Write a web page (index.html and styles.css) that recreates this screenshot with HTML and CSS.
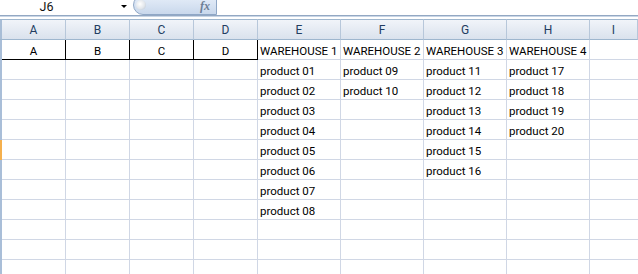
FILE: index.html
```html
<!DOCTYPE html>
<html>
<head>
    <meta charset="utf-8" />
    <title>Warehouse Products</title>
    <link rel="stylesheet" href="styles.css">
</head>
<body>
    <div class="toolbar">
        <div class="name-box">J6</div>
        <div class="name-arrow"></div>
        <div class="formula-btn">
            <span class="knob"></span>
            <span class="fx">fx</span>
        </div>
    </div>
    <div class="rule"></div>

    <div class="sheet" id="sheet"></div>

    <script>
    const cols = ["A", "B", "C", "D", "E", "F", "G", "H", "I"];
    const data = [
      ["A", "B", "C", "D", "WAREHOUSE 1", "WAREHOUSE 2", "WAREHOUSE 3", "WAREHOUSE 4"],
      ["", "", "", "", "product 01", "product 09", "product 11", "product 17"],
      ["", "", "", "", "product 02", "product 10", "product 12", "product 18"],
      ["", "", "", "", "product 03", "", "product 13", "product 19"],
      ["", "", "", "", "product 04", "", "product 14", "product 20"],
      ["", "", "", "", "product 05", "", "product 15", ""],
      ["", "", "", "", "product 06", "", "product 16", ""],
      ["", "", "", "", "product 07", "", "", ""],
      ["", "", "", "", "product 08", "", "", ""],
      [], [], []
    ];
    const activeRow = 6;

    const sheet = document.getElementById("sheet");
    let html = `<div class="corner"></div>`;
    cols.forEach(c => { html += `<div class="col-head">${c}</div>`; });

    data.forEach((row, i) => {
      const r = i + 1;
      html += `<div class="row-head${r === activeRow ? " active" : ""}"></div>`;
      cols.forEach((c, j) => {
        const text = row[j] || "";
        let cls = "cell";
        if (r === 1 && j < 4) cls += " boxed";
        html += `<div class="${cls}">${text}</div>`;
      });
    });
    sheet.innerHTML = html;
    </script>
</body>
</html>
```

FILE: styles.css
```css
body {
    margin: 0;
    background: #fff;
    font-family: Roboto, "Liberation Sans", sans-serif;
    overflow: hidden;
}

/* formula bar strip */
.toolbar {
    height: 15px;
    display: flex;
    align-items: flex-start;
    overflow: hidden;
}

.name-box {
    width: 93px;
    text-align: center;
    font-size: 12.5px;
    line-height: 14px;
    color: #111;
}

.name-arrow {
    margin: 5px 0 0 28px;
    width: 0;
    height: 0;
    border-left: 3.5px solid transparent;
    border-right: 3.5px solid transparent;
    border-top: 3.5px solid #000;
}

.formula-btn {
    margin: -5px 0 0 6px;
    width: 84px;
    height: 20px;
    box-sizing: border-box;
    border: 1px solid #8fa7c6;
    border-radius: 11px 0 0 11px;
    background: linear-gradient(#e6eef9, #c9d8ec);
    display: flex;
    align-items: flex-end;
    padding: 0 6px 2px 2px;
}

.knob {
    width: 10px;
    height: 10px;
    margin-bottom: 2px;
    border-radius: 50%;
    background: radial-gradient(circle at 40% 40%, #fff, #e2e6eb 55%, #aebbcb);
}

.fx {
    margin-left: auto;
    font-family: "Liberation Serif", serif;
    font-style: italic;
    font-weight: bold;
    font-size: 12px;
    line-height: 11px;
    color: #6d7f96;
}

.rule {
    height: 1px;
    background: #93a8c3;
    border-bottom: 1px solid #c9d6e6;
    margin-bottom: 2px;
}

/* grid */
.sheet {
    display: grid;
    grid-template-columns: 2px repeat(4, 64px) repeat(4, 83px) 48px;
    grid-template-rows: 21px;
    grid-auto-rows: 20px;
    font-size: 11.5px;
}

.corner,
.col-head {
    box-sizing: border-box;
    border-top: 1px solid #9eb6ce;
    border-bottom: 1px solid #9eb6ce;
    background: linear-gradient(#f1f4f9, #dae2ed);
}

.col-head {
    border-right: 1px solid #b7c7da;
    text-align: center;
    line-height: 15px;
    padding-top: 3px;
    color: #223d61;
    font-size: 12px;
}

.col-head:last-child {
    border-right: none;
}

.corner {
    background: #a8bdd6;
}

.row-head {
    background: #a9bed8;
}

.row-head.active {
    background: #f5b04d;
}

.cell {
    box-sizing: border-box;
    border-right: 1px solid #d0d7e5;
    border-bottom: 1px solid #d0d7e5;
    padding: 4px 0 0 2px;
    line-height: 15px;
    white-space: nowrap;
    overflow: hidden;
    color: #000;
}

.cell:nth-child(10n) {
    border-right: none;
}

.cell.boxed {
    border-right-color: #000;
    border-bottom-color: #000;
    text-align: center;
    padding-left: 0;
}
```
